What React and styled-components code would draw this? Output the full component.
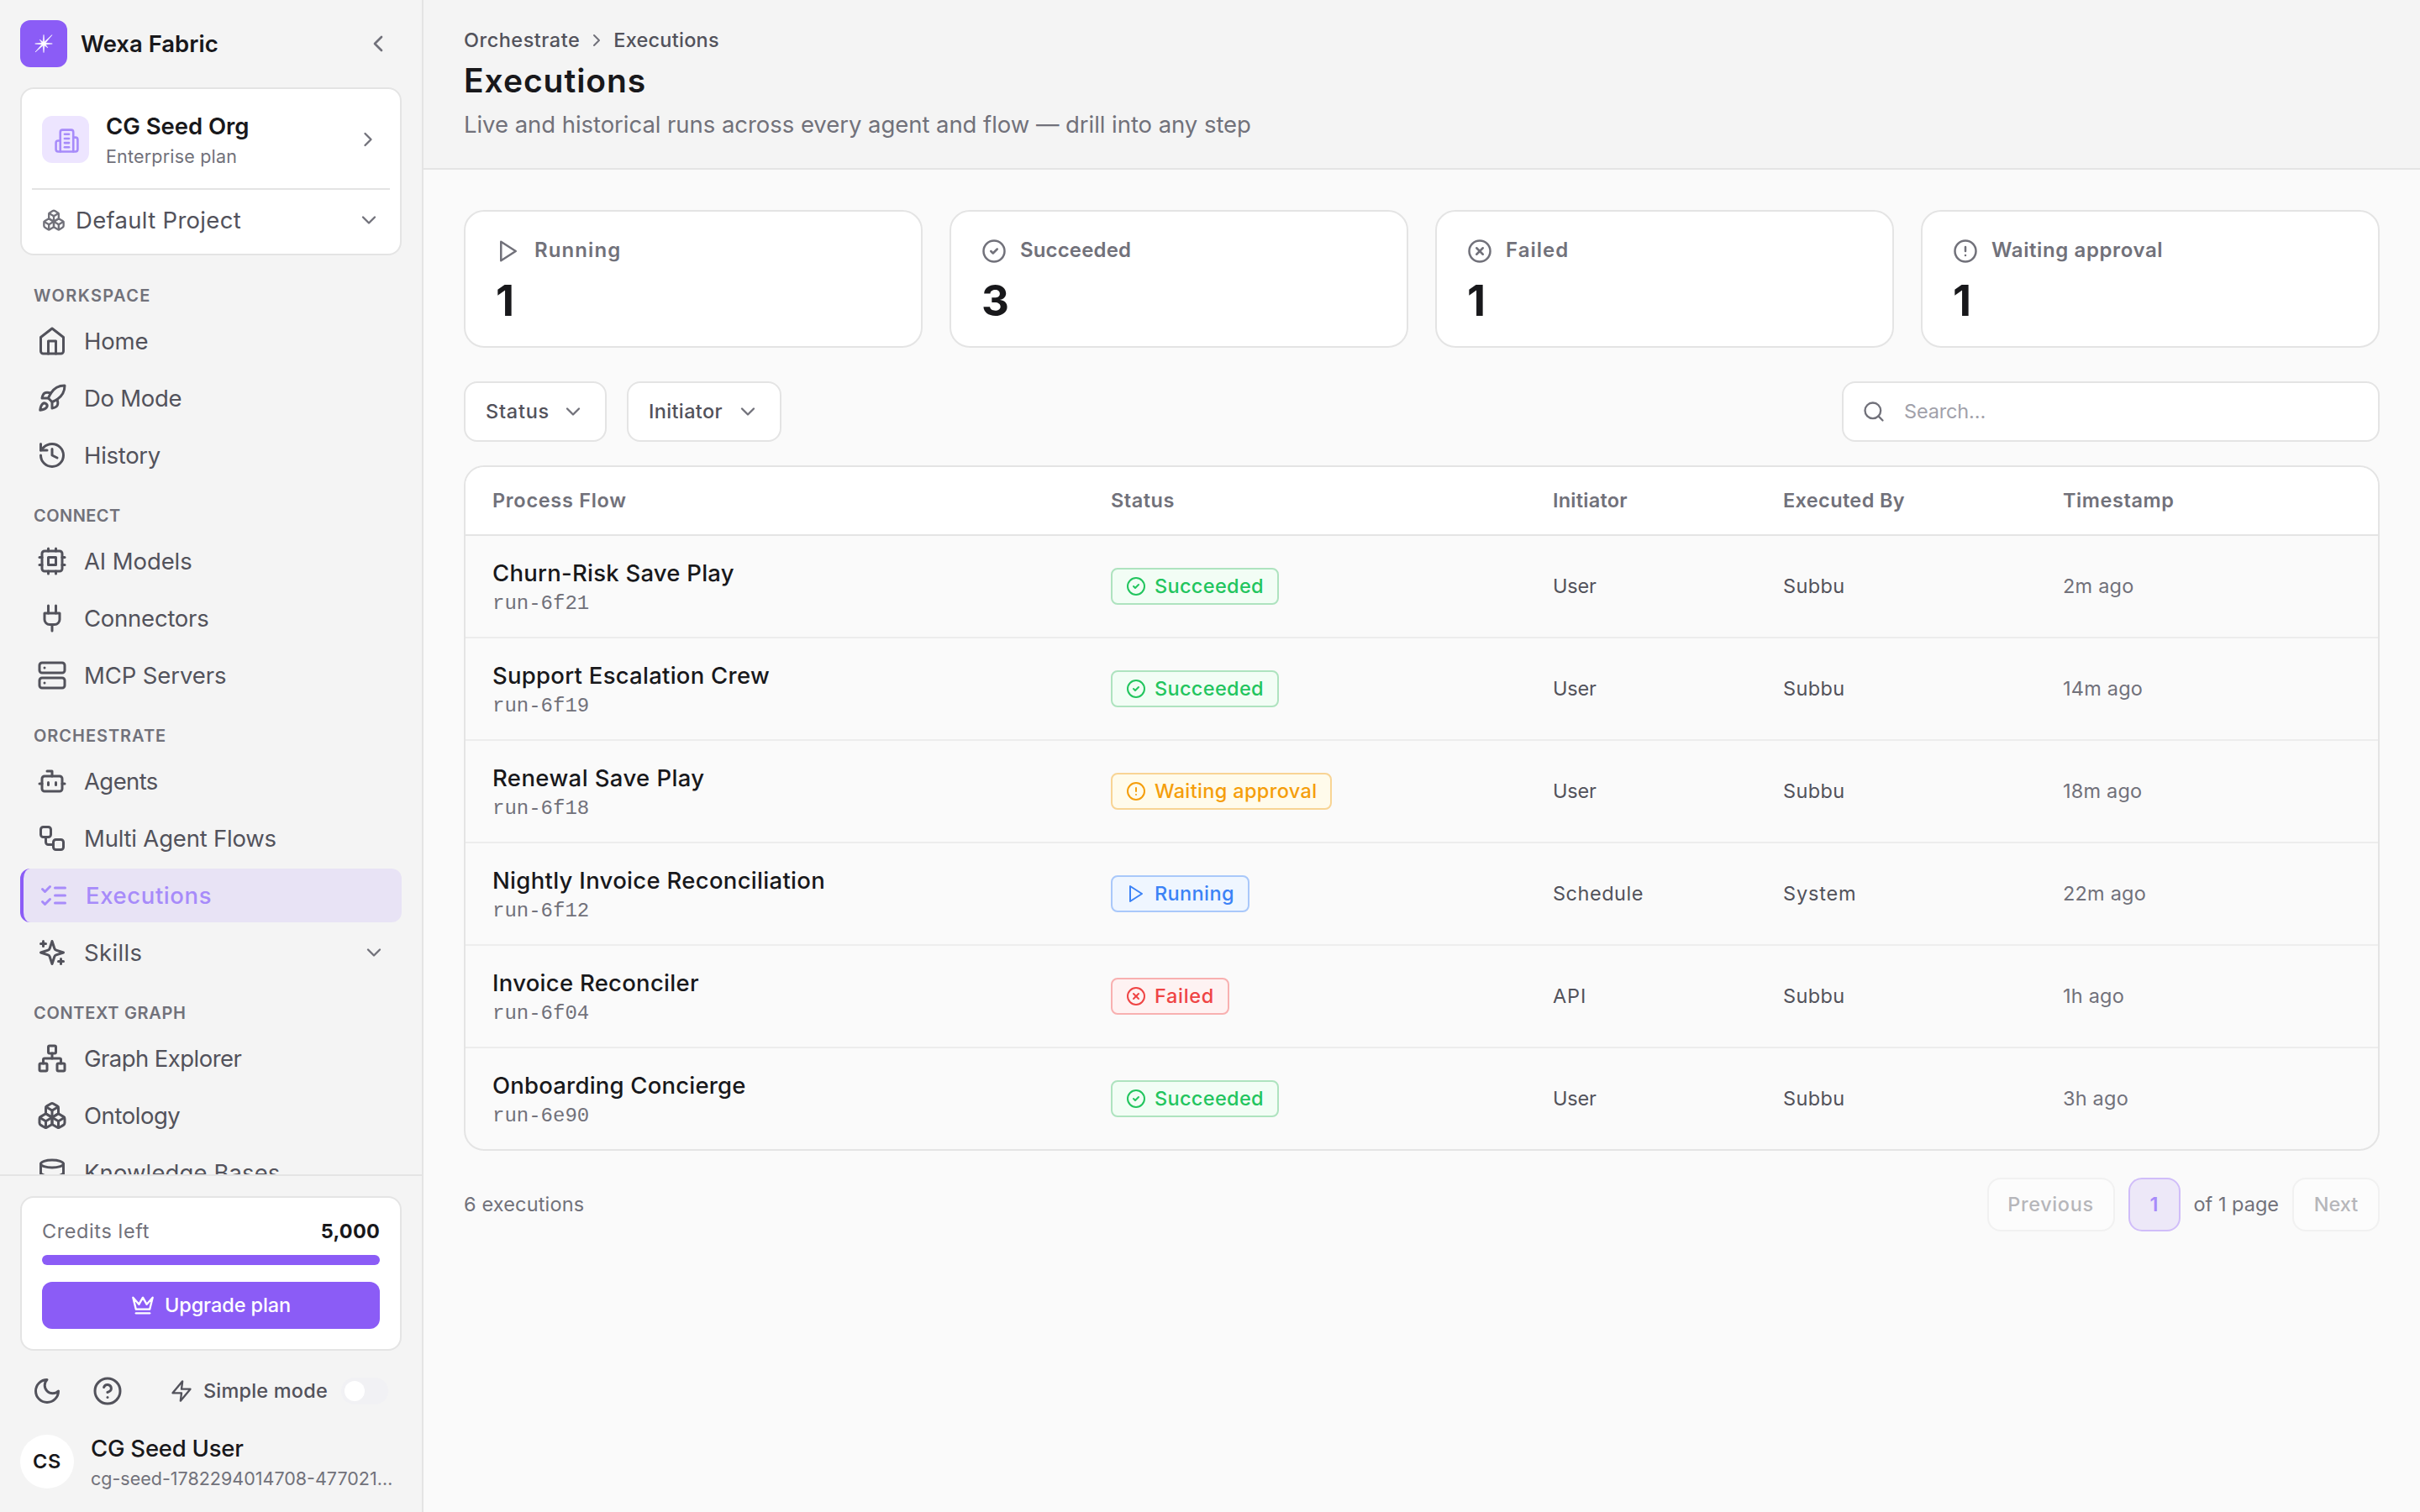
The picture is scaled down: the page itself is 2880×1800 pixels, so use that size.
import React from "react";
import styled, { createGlobalStyle } from "styled-components";
import { Boxes, Search } from "lucide-react";

const sans = `Inter, "Noto Sans", sans-serif`;
const mono = `"Liberation Mono", monospace`;

const color = {
  page: "#fafafa",
  panel: "#f4f4f4",
  card: "#ffffff",
  line: "#e4e4e4",
  lineSoft: "#ededed",
  ink: "#18181b",
  body: "#52525b",
  muted: "#71717a",
  faint: "#a1a1aa",
  primary: "#8b5cf6",
  accent: "#a78bfa",
};

const tones = {
  green: { fg: "#22c55e", bg: "#f2fdf5", line: "#aee3bf" },
  amber: { fg: "#f59e0b", bg: "#fffbeb", line: "#f8d494" },
  blue: { fg: "#3b82f6", bg: "#eff6ff", line: "#a9c8fa" },
  red: { fg: "#ef4444", bg: "#fef2f2", line: "#f8b0b0" },
};

const Global = createGlobalStyle`
  *, *::before, *::after { box-sizing: border-box; }
  body { margin: 0; background: ${color.page}; font-family: ${sans}; color: ${color.ink}; }
  svg { display: block; flex: none; }
`;

/* ---------- icons ---------- */

const paths = {
  building: ["M6 22V4a2 2 0 0 1 2-2h8a2 2 0 0 1 2 2v18Z", "M6 12H4a2 2 0 0 0-2 2v6a2 2 0 0 0 2 2h2", "M18 9h2a2 2 0 0 1 2 2v9a2 2 0 0 1-2 2h-2", "M10 6h4", "M10 10h4", "M10 14h4", "M10 18h4"],
  home: ["m3 9 9-7 9 7v11a2 2 0 0 1-2 2H5a2 2 0 0 1-2-2z", "M9 22V12h6v10"],
  rocket: ["M4.5 16.5c-1.5 1.26-2 5-2 5s3.74-.5 5-2c.71-.84.7-2.13-.09-2.91a2.18 2.18 0 0 0-2.91-.09z", "m12 15-3-3a22 22 0 0 1 2-3.95A12.88 12.88 0 0 1 22 2c0 2.72-.78 7.5-6 11a22.35 22.35 0 0 1-4 2z", "M9 12H4s.55-3.03 2-4c1.62-1.08 5 0 5 0", "M12 15v5s3.03-.55 4-2c1.08-1.62 0-5 0-5"],
  history: ["M3 12a9 9 0 1 0 9-9 9.75 9.75 0 0 0-6.74 2.74L3 8", "M3 3v5h5", "M12 7v5l4 2"],
  cpu: ["M6 4h12a2 2 0 0 1 2 2v12a2 2 0 0 1-2 2H6a2 2 0 0 1-2-2V6a2 2 0 0 1 2-2z", "M9 9h6v6H9z", "M15 2v2", "M15 20v2", "M2 15h2", "M2 9h2", "M20 15h2", "M20 9h2", "M9 2v2", "M9 20v2"],
  plug: ["M12 22v-5", "M9 8V2", "M15 8V2", "M18 8v5a4 4 0 0 1-4 4h-4a4 4 0 0 1-4-4V8Z"],
  server: ["M4 2h16a2 2 0 0 1 2 2v4a2 2 0 0 1-2 2H4a2 2 0 0 1-2-2V4a2 2 0 0 1 2-2z", "M4 14h16a2 2 0 0 1 2 2v4a2 2 0 0 1-2 2H4a2 2 0 0 1-2-2v-4a2 2 0 0 1 2-2z", "M6 6h.01", "M6 18h.01"],
  bot: ["M12 8V4H8", "M6 8h12a2 2 0 0 1 2 2v8a2 2 0 0 1-2 2H6a2 2 0 0 1-2-2v-8a2 2 0 0 1 2-2z", "M2 14h2", "M20 14h2", "M15 13v2", "M9 13v2"],
  workflow: ["M5 3h4a2 2 0 0 1 2 2v4a2 2 0 0 1-2 2H5a2 2 0 0 1-2-2V5a2 2 0 0 1 2-2z", "M7 11v4a2 2 0 0 0 2 2h4", "M15 13h4a2 2 0 0 1 2 2v4a2 2 0 0 1-2 2h-4a2 2 0 0 1-2-2v-4a2 2 0 0 1 2-2z"],
  checks: ["m3 17 2 2 4-4", "m3 7 2 2 4-4", "M13 6h8", "M13 12h8", "M13 18h8"],
  sparkles: ["m12 3-1.912 5.813a2 2 0 0 1-1.275 1.275L3 12l5.813 1.912a2 2 0 0 1 1.275 1.275L12 21l1.912-5.813a2 2 0 0 1 1.275-1.275L21 12l-5.813-1.912a2 2 0 0 1-1.275-1.275L12 3Z", "M5 3v4", "M19 17v4", "M3 5h4", "M17 19h4"],
  network: ["M17 16h4a1 1 0 0 1 1 1v4a1 1 0 0 1-1 1h-4a1 1 0 0 1-1-1v-4a1 1 0 0 1 1-1z", "M3 16h4a1 1 0 0 1 1 1v4a1 1 0 0 1-1 1H3a1 1 0 0 1-1-1v-4a1 1 0 0 1 1-1z", "M10 2h4a1 1 0 0 1 1 1v4a1 1 0 0 1-1 1h-4a1 1 0 0 1-1-1V3a1 1 0 0 1 1-1z", "M5 16v-3a1 1 0 0 1 1-1h12a1 1 0 0 1 1 1v3", "M12 12V8"],
  database: ["M3 5a9 3 0 1 0 18 0a9 3 0 1 0-18 0", "M3 5v14a9 3 0 0 0 18 0V5", "M3 12a9 3 0 0 0 18 0"],
  crown: ["m2 4 3 12h14l3-12-6 7-4-7-4 7-6-7z", "M5 20h14"],
  moon: ["M12 3a6 6 0 0 0 9 9 9 9 0 1 1-9-9Z"],
  help: ["M2 12a10 10 0 1 0 20 0a10 10 0 1 0-20 0", "M9.09 9a3 3 0 0 1 5.83 1c0 2-3 3-3 3", "M12 17h.01"],
  zap: ["M13 2 3 14h9l-1 8 10-12h-9l1-8z"],
  play: ["M5 3l14 9-14 9V3z"],
  success: ["M2 12a10 10 0 1 0 20 0a10 10 0 1 0-20 0", "m9 12 2 2 4-4"],
  failure: ["M2 12a10 10 0 1 0 20 0a10 10 0 1 0-20 0", "m15 9-6 6", "m9 9 6 6"],
  alert: ["M2 12a10 10 0 1 0 20 0a10 10 0 1 0-20 0", "M12 8v4", "M12 16h.01"],
  left: ["m15 18-6-6 6-6"],
  right: ["m9 18 6-6-6-6"],
  down: ["m6 9 6 6 6-6"],
};

function Icon({ name, size = 36, stroke = 2, tint = "currentColor" }) {
  const common = { width: size, height: size, color: tint, strokeWidth: stroke };
  if (name === "boxes") return <Boxes {...common} />;
  if (name === "search") return <Search {...common} />;
  return (
    <svg
      width={size}
      height={size}
      viewBox="0 0 24 24"
      fill="none"
      stroke={tint}
      strokeWidth={stroke}
      strokeLinecap="round"
      strokeLinejoin="round"
    >
      {paths[name].map((d) => (
        <path key={d} d={d} />
      ))}
    </svg>
  );
}

function Spark() {
  const tips = [[0, -10.6], [10, -10.4], [10.3, 0], [4.8, 4.8], [0, 10.6], [-10, 10], [-10.3, 0], [-4.8, -4.8]];
  const points = tips
    .map(([x, y], i) => {
      const a = ((-90 + 22.5 + i * 45) * Math.PI) / 180;
      return `${x},${y} ${(2.3 * Math.cos(a)).toFixed(2)},${(2.3 * Math.sin(a)).toFixed(2)}`;
    })
    .join(" ");
  return (
    <svg width="24" height="24" viewBox="-12 -12 24 24">
      <polygon points={points} fill="#fff" stroke="#fff" strokeWidth="0.6" strokeLinejoin="round" />
    </svg>
  );
}

/* ---------- text ---------- */

const Text = styled.span`
  font-size: 23.5px;
  line-height: 32px;
  font-weight: ${(p) => p.$weight || 400};
  letter-spacing: ${(p) => p.$ls || 0}px;
  color: ${(p) => p.$tint || color.body};
  white-space: nowrap;
`;

const Strong = styled(Text)`
  font-size: 27.5px;
  line-height: 40px;
  color: ${(p) => p.$tint || color.ink};
`;

const Caption = styled(Text)`
  font-size: 21.5px;
  color: ${color.muted};
`;

/* ---------- sidebar ---------- */

const Shell = styled.div`
  display: flex;
  width: 2880px;
  height: 1800px;
  overflow: hidden;
  background: ${color.page};
`;

const Sidebar = styled.aside`
  display: flex;
  flex-direction: column;
  flex: none;
  width: 504px;
  background: ${color.panel};
  border-right: 2px solid ${color.line};
`;

const Brand = styled.div`
  display: flex;
  align-items: center;
  gap: 16px;
  height: 104px;
  padding: 0 36px 0 24px;
`;

const Logo = styled.div`
  display: grid;
  place-items: center;
  width: 56px;
  height: 56px;
  border-radius: 12px;
  background: ${color.primary};
`;

const BrandName = styled(Strong)`
  flex: 1;
`;

const OrgCard = styled.section`
  flex: none;
  height: 200px;
  margin: 0 24px 8px;
  padding: 2px 0 0;
  border: 2px solid ${color.line};
  border-radius: 16px;
  background: ${color.card};
`;

const OrgRow = styled.div`
  display: flex;
  align-items: center;
  gap: 20px;
  height: 116px;
  padding: 0 24px;
`;

const OrgBadge = styled.div`
  display: grid;
  place-items: center;
  width: 56px;
  height: 56px;
  padding: 2px 0 0 2px;
  border-radius: 12px;
  background: #ede5ff;
`;

const Stack = styled.div`
  display: flex;
  flex-direction: column;
  flex: 1;
  min-width: 0;
`;

const ProjectRow = styled.div`
  display: flex;
  align-items: center;
  gap: 12px;
  height: 74px;
  margin: 0 12px;
  padding: 0 11px 0 12px;
  border-top: 2px solid ${color.line};
`;

const ProjectName = styled(Strong)`
  flex: 1;
`;

const Nav = styled.nav`
  flex: 1;
  min-height: 0;
  overflow: hidden;
  padding: 0 24px;
`;

const NavLabel = styled.h2`
  margin: 0;
  padding: 30px 16px 12px;
  font-size: 20px;
  line-height: 20px;
  font-weight: 600;
  letter-spacing: ${(p) => p.$ls}px;
  color: ${color.muted};
`;

const NavList = styled.ul`
  display: flex;
  flex-direction: column;
  gap: 4px;
  margin: 0;
  padding: 0;
  list-style: none;
`;

const NavItem = styled.li`
  display: flex;
  align-items: center;
  gap: 20px;
  height: 64px;
  padding: 0 19px 0 ${(p) => (p.$active ? 18 : 20)}px;
  border-left: ${(p) => (p.$active ? `4px solid ${color.primary}` : "none")};
  border-radius: 12px;
  background: ${(p) => (p.$active ? "#e8e3f5" : "transparent")};
  color: ${(p) => (p.$active ? color.accent : color.body)};
`;

const NavText = styled(Strong)`
  flex: 1;
  color: inherit;
`;

const SidebarFoot = styled.footer`
  flex: none;
  height: 402px;
  padding: 24px 24px 0;
  border-top: 2px solid ${color.line};
`;

const CreditCard = styled.section`
  padding: 24px;
  border: 2px solid ${color.line};
  border-radius: 16px;
  background: ${color.card};
`;

const CreditRow = styled.div`
  display: flex;
  justify-content: space-between;
  height: 32px;
  align-items: center;
`;

const Meter = styled.div`
  height: 12px;
  margin: 12px 0 20px;
  border-radius: 6px;
  background: ${color.primary};
`;

const UpgradeButton = styled.button`
  display: flex;
  align-items: center;
  justify-content: center;
  gap: 12px;
  width: 100%;
  height: 56px;
  padding: 0;
  border: 0;
  border-radius: 12px;
  background: ${color.primary};
  color: #fff;
  font-family: inherit;
`;

const ToolRow = styled.div`
  display: flex;
  align-items: center;
  gap: 36px;
  height: 64px;
  margin: 16px 0 20px;
  padding: 0 16px 0 14px;
  color: ${color.body};
`;

const ModeControl = styled.div`
  display: flex;
  align-items: center;
  gap: 12px;
  margin-left: auto;
`;

const Switch = styled.div`
  display: flex;
  align-items: center;
  width: 56px;
  height: 32px;
  margin-left: 4px;
  padding: 0 4px;
  border-radius: 16px;
  background: #f1f1f4;
`;

const Thumb = styled.div`
  width: 24px;
  height: 24px;
  border-radius: 50%;
  background: #fff;
`;

const UserRow = styled.div`
  display: flex;
  align-items: center;
  gap: 20px;
  height: 64px;
`;

const Avatar = styled.div`
  display: grid;
  place-items: center;
  flex: none;
  width: 64px;
  height: 64px;
  border-radius: 50%;
  background: #fff;
`;

/* ---------- main ---------- */

const Main = styled.main`
  flex: 1;
  min-width: 0;
`;

const PageHeader = styled.header`
  display: flex;
  flex-direction: column;
  height: 202px;
  padding: 32px 48px 0;
  background: ${color.panel};
  border-bottom: 2px solid ${color.line};
`;

const Crumbs = styled.div`
  display: flex;
  align-items: center;
  gap: 8px;
  height: 32px;
`;

const Title = styled.h1`
  margin: 8px 0;
  font-size: 39px;
  line-height: 48px;
  font-weight: 600;
  letter-spacing: 0.96px;
`;

const Content = styled.div`
  padding: 48px 48px 0;
`;

const Stats = styled.div`
  display: grid;
  grid-template-columns: repeat(4, 1fr);
  gap: 32px;
`;

const StatCard = styled.section`
  height: 164px;
  padding: 32px 36px 0;
  border: 2px solid ${color.line};
  border-radius: 24px;
  background: ${color.card};
`;

const StatHead = styled.div`
  display: flex;
  align-items: center;
  gap: 16px;
  height: 30px;
`;

const StatLabel = styled(Text)`
  padding-bottom: 2px;
  font-size: 24px;
`;

const StatValue = styled.div`
  margin-top: 18px;
  font-size: 51px;
  line-height: 52px;
  font-weight: 700;
`;

const Toolbar = styled.div`
  display: flex;
  gap: 24px;
  margin: 40px 0 28px;
`;

const FilterButton = styled.button`
  display: flex;
  align-items: center;
  justify-content: space-between;
  width: ${(p) => p.$width}px;
  height: 72px;
  padding: 0 24px;
  border: 2px solid ${color.line};
  border-radius: 16px;
  background: ${color.card};
  font-family: inherit;
`;

const SearchBox = styled.label`
  display: flex;
  align-items: center;
  gap: 22px;
  width: 640px;
  height: 72px;
  margin-left: auto;
  padding: 0 22px;
  border: 2px solid ${color.line};
  border-radius: 16px;
  background: ${color.card};
`;

const SearchInput = styled.input`
  flex: 1;
  min-width: 0;
  padding: 0;
  border: 0;
  outline: 0;
  background: transparent;
  font: 400 23.5px/32px ${sans};
  letter-spacing: -0.15px;
  &::placeholder {
    color: ${color.faint};
    opacity: 1;
  }
`;

const Table = styled.div`
  overflow: hidden;
  border: 2px solid ${color.line};
  border-radius: 24px;
`;

const Row = styled.div`
  display: grid;
  grid-template-columns: 736px 526px 274px 333px 1fr;
  align-items: center;
  height: ${(p) => (p.$last ? 120 : 122)}px;
  border-bottom: ${(p) => (p.$last ? "none" : `2px solid ${color.lineSoft}`)};
`;

const HeadRow = styled(Row)`
  height: 82px;
  border-bottom-color: ${color.line};
  background: ${color.card};
`;

const Cell = styled.div`
  display: flex;
  flex-direction: column;
  align-items: flex-start;
  padding-left: 32px;
`;

const FlowName = styled(Strong)`
  line-height: 42px;
`;

const RunId = styled.span`
  font: 24px/32px ${mono};
  color: ${color.muted};
`;

const Badge = styled.span`
  display: inline-flex;
  align-items: center;
  gap: 10px;
  height: 44px;
  padding: 0 16px;
  border: 2px solid ${(p) => p.$tone.line};
  border-radius: 8px;
  background: ${(p) => p.$tone.bg};
  color: ${(p) => p.$tone.fg};
`;

const Footer = styled.div`
  display: flex;
  align-items: center;
  justify-content: space-between;
  height: 64px;
  margin-top: 32px;
`;

const Pager = styled.div`
  display: flex;
  align-items: center;
  gap: 16px;
`;

const PageButton = styled.button`
  width: ${(p) => p.$width}px;
  height: 64px;
  padding: 0;
  border: 2px solid ${(p) => (p.$current ? "#d0bdf9" : color.line)};
  border-radius: 16px;
  background: ${(p) => (p.$current ? "#ede8f8" : color.card)};
  opacity: ${(p) => (p.$current ? 1 : 0.4)};
  font-family: inherit;
`;

/* ---------- data ---------- */

const sections = [
  { label: "WORKSPACE", ls: 1.4, items: [["home", "Home", -0.2], ["rocket", "Do Mode", -0.3], ["history", "History", -0.3]] },
  { label: "CONNECT", ls: 0.45, items: [["cpu", "AI Models", -0.1], ["plug", "Connectors", -0.24], ["server", "MCP Servers", -0.1]] },
  { label: "ORCHESTRATE", ls: 0.96, items: [["bot", "Agents", -0.6], ["workflow", "Multi Agent Flows", -0.2], ["checks", "Executions", 0.6], ["sparkles", "Skills", 0.35]] },
  { label: "CONTEXT GRAPH", ls: 0.68, items: [["network", "Graph Explorer", -0.55], ["boxes", "Ontology", -0.45], ["database", "Knowledge Bases", 0.1]] },
];

const stats = [
  ["play", "Running", 1, 1.1],
  ["success", "Succeeded", 3, 0.15],
  ["failure", "Failed", 1, 1],
  ["alert", "Waiting approval", 1, 0.6],
];

const statuses = {
  Succeeded: { icon: "success", tone: tones.green, ls: 0.33 },
  "Waiting approval": { icon: "alert", tone: tones.amber, ls: 0.35 },
  Running: { icon: "play", tone: tones.blue, ls: 0.37 },
  Failed: { icon: "failure", tone: tones.red, ls: 0.7 },
};

const columns = [["Process Flow", 0.7], ["Status", 0.53], ["Initiator", 0.24], ["Executed By", 0.37], ["Timestamp", 0.56]];

const runs = [
  ["Churn-Risk Save Play", 0.24, "run-6f21", "Succeeded", "User", "Subbu", "2m ago"],
  ["Support Escalation Crew", 0.26, "run-6f19", "Succeeded", "User", "Subbu", "14m ago"],
  ["Renewal Save Play", 0.4, "run-6f18", "Waiting approval", "User", "Subbu", "18m ago"],
  ["Nightly Invoice Reconciliation", 0.3, "run-6f12", "Running", "Schedule", "System", "22m ago"],
  ["Invoice Reconciler", 0.27, "run-6f04", "Failed", "API", "Subbu", "1h ago"],
  ["Onboarding Concierge", 0.2, "run-6e90", "Succeeded", "User", "Subbu", "3h ago"],
];

const cellTracking = { User: -0.16, Schedule: 0.52, API: 0.9, Subbu: 0.4, System: 0.85 };

/* ---------- app ---------- */

export default function App() {
  return (
    <Shell>
      <Global />
      <Sidebar>
        <Brand>
          <Logo><Spark /></Logo>
          <BrandName $weight={600}>Wexa Fabric</BrandName>
          <Icon name="left" size={32} tint={color.muted} />
        </Brand>

        <OrgCard>
          <OrgRow>
            <OrgBadge><Icon name="building" size={31} stroke={2} tint={color.accent} /></OrgBadge>
            <Stack>
              <Strong $weight={600} $ls={-0.05}>CG Seed Org</Strong>
              <Caption $ls={0.19}>Enterprise plan</Caption>
            </Stack>
            <Icon name="right" size={28} tint={color.muted} />
          </OrgRow>
          <ProjectRow>
            <Icon name="boxes" size={28} tint={color.muted} />
            <ProjectName $ls={0.3} $tint={color.body}>Default Project</ProjectName>
            <Icon name="down" size={28} tint={color.muted} />
          </ProjectRow>
        </OrgCard>

        <Nav>
          {sections.map((section) => (
            <div key={section.label}>
              <NavLabel $ls={section.ls}>{section.label}</NavLabel>
              <NavList>
                {section.items.map(([icon, label, ls]) => {
                  const active = label === "Executions";
                  return (
                    <NavItem key={label} $active={active}>
                      <Icon name={icon} />
                      <NavText $ls={ls} $weight={active ? 500 : 400}>{label}</NavText>
                      {label === "Skills" && <Icon name="down" size={28} tint={color.muted} />}
                    </NavItem>
                  );
                })}
              </NavList>
            </div>
          ))}
        </Nav>

        <SidebarFoot>
          <CreditCard>
            <CreditRow>
              <Text $ls={0.59} $tint={color.muted}>Credits left</Text>
              <Text $ls={0.2} $weight={700} $tint={color.ink}>5,000</Text>
            </CreditRow>
            <Meter />
            <UpgradeButton>
              <Icon name="crown" size={28} />
              <Text $weight={500} $ls={-0.1} $tint="#fff">Upgrade plan</Text>
            </UpgradeButton>
          </CreditCard>
          <ToolRow>
            <Icon name="moon" />
            <Icon name="help" />
            <ModeControl>
              <Icon name="zap" size={28} />
              <Text $weight={500} $ls={0.2}>Simple mode</Text>
              <Switch><Thumb /></Switch>
            </ModeControl>
          </ToolRow>
          <UserRow>
            <Avatar><Text $weight={600} $ls={0.8} $tint={color.ink}>CS</Text></Avatar>
            <Stack>
              <Strong $weight={500} $ls={-0.23}>CG Seed User</Strong>
              <Caption>cg-seed-1782294014708-477021…</Caption>
            </Stack>
          </UserRow>
        </SidebarFoot>
      </Sidebar>

      <Main>
        <PageHeader>
          <Crumbs>
            <Text $weight={500} $ls={0.5}>Orchestrate</Text>
            <Icon name="right" size={24} tint={color.muted} />
            <Text $weight={500} $ls={0.25}>Executions</Text>
          </Crumbs>
          <Title>Executions</Title>
          <Strong $tint={color.muted} $ls={-0.05}>
            Live and historical runs across every agent and flow — drill into any step
          </Strong>
        </PageHeader>

        <Content>
          <Stats>
            {stats.map(([icon, label, value, ls]) => (
              <StatCard key={label}>
                <StatHead>
                  <Icon name={icon} size={30} tint={color.muted} />
                  <StatLabel $weight={600} $ls={ls} $tint={color.muted}>{label}</StatLabel>
                </StatHead>
                <StatValue>{value}</StatValue>
              </StatCard>
            ))}
          </Stats>

          <Toolbar>
            <FilterButton $width={170}>
              <Text $weight={500} $ls={0.75}>Status</Text>
              <Icon name="down" size={28} tint={color.muted} />
            </FilterButton>
            <FilterButton $width={184}>
              <Text $weight={500} $ls={0.35}>Initiator</Text>
              <Icon name="down" size={28} tint={color.muted} />
            </FilterButton>
            <SearchBox>
              <Icon name="search" size={28} tint={color.muted} />
              <SearchInput placeholder="Search…" />
            </SearchBox>
          </Toolbar>

          <Table>
            <HeadRow>
              {columns.map(([label, ls]) => (
                <Cell key={label}>
                  <Text $weight={600} $ls={ls} $tint={color.muted}>{label}</Text>
                </Cell>
              ))}
            </HeadRow>
            {runs.map(([name, ls, id, status, initiator, by, time], i) => {
              const s = statuses[status];
              return (
                <Row key={id} $last={i === runs.length - 1}>
                  <Cell>
                    <FlowName $weight={500} $ls={ls}>{name}</FlowName>
                    <RunId>{id}</RunId>
                  </Cell>
                  <Cell>
                    <Badge $tone={s.tone}>
                      <Icon name={s.icon} size={24} />
                      <Text $weight={500} $ls={s.ls} $tint="inherit">{status}</Text>
                    </Badge>
                  </Cell>
                  <Cell><Text $ls={cellTracking[initiator]}>{initiator}</Text></Cell>
                  <Cell><Text $ls={cellTracking[by]}>{by}</Text></Cell>
                  <Cell><Text $ls={0.2} $tint={color.muted}>{time}</Text></Cell>
                </Row>
              );
            })}
          </Table>

          <Footer>
            <Text $ls={0.15} $tint={color.muted}>6 executions</Text>
            <Pager>
              <PageButton $width={152}><Text $weight={500} $ls={0.6}>Previous</Text></PageButton>
              <PageButton $width={62} $current><Text $weight={600} $tint={color.accent}>1</Text></PageButton>
              <Text $tint={color.muted}>of 1 page</Text>
              <PageButton $width={104}><Text $weight={500}>Next</Text></PageButton>
            </Pager>
          </Footer>
        </Content>
      </Main>
    </Shell>
  );
}
